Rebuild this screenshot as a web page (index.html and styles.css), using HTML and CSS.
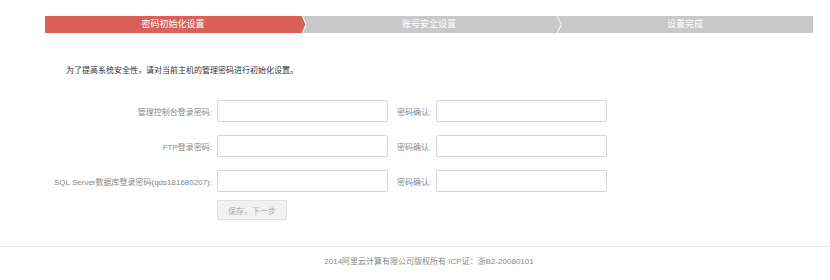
FILE: index.html
```html
<!DOCTYPE html>
<html lang="zh-CN">
<head>
  <meta charset="UTF-8">
  <title>密码初始化设置</title>
  <link rel="stylesheet" href="styles.css">
</head>
<body>
  <div class="container">
    <ol class="steps">
      <li class="step active">
        密码初始化设置
        <svg class="chevron" width="8" height="17" viewBox="0 0 8 17">
          <polygon points="4,0 7.5,8.5 4,17 0,17 0,0" fill="#da605a"/>
          <polyline points="4.5,0 8,8.5 4.5,17" fill="none" stroke="#fff" stroke-width="1"/>
        </svg>
      </li>
      <li class="step">
        账号安全设置
        <svg class="chevron gray" width="8" height="17" viewBox="0 0 8 17">
          <polyline points="2,0 6.5,8.5 2,17" fill="none" stroke="#fff" stroke-width="1"/>
        </svg>
      </li>
      <li class="step">设置完成</li>
    </ol>

    <p class="intro">为了提高系统安全性，请对当前主机的管理密码进行初始化设置。</p>

    <form class="init-form">
      <label class="field-label">管理控制台登录密码:</label>
      <input class="field" type="password">
      <label class="field-label confirm">密码确认:</label>
      <input class="field" type="password">

      <label class="field-label">FTP登录密码:</label>
      <input class="field" type="password">
      <label class="field-label confirm">密码确认:</label>
      <input class="field" type="password">

      <label class="field-label">SQL Server数据库登录密码(qds181680207):</label>
      <input class="field" type="password">
      <label class="field-label confirm">密码确认:</label>
      <input class="field" type="password">

      <button class="button-next" type="button">保存，下一步</button>
    </form>
  </div>

  <div class="footer">2014阿里云计算有限公司版权所有 ICP证：浙B2-20080101</div>
</body>
</html>
```

FILE: styles.css
```css
body{
  margin: 0;
  font-family: "Liberation Sans", "Noto Sans CJK SC", sans-serif;
  font-size: 8px;
  color: #333;
  background: #fff;
}
.container{
  width: 768px;
  margin-left: 45px;
}
.steps{
  display: flex;
  margin: 16px 0 0;
  padding: 0;
  list-style: none;
}
.step{
  position: relative;
  width: 256px;
  height: 17px;
  line-height: 17px;
  text-align: center;
  font-size: 9px;
  color: #fff;
  background-color: #c8c8c8;
}
.step.active{
  background-color: #da605a;
}
.chevron{
  position: absolute;
  top: 0;
  right: -5px;
  z-index: 1;
}
.chevron.gray{
  right: -6px;
}
.intro{
  margin: 32px 0 0 21px;
  line-height: 12px;
}
.init-form{
  display: grid;
  grid-template-columns: 167px 171px max-content 171px;
  grid-auto-rows: 22px;
  justify-content: start;
  column-gap: 5px;
  row-gap: 13px;
  align-items: center;
  margin-top: 23px;
}
.field-label{
  text-align: right;
  color: #888;
  white-space: nowrap;
}
.field-label.confirm{
  margin-left: 4px;
  text-align: left;
}
.field{
  box-sizing: border-box;
  height: 22px;
  margin: 0;
  border: 1px solid #d6d6d6;
  border-radius: 2px;
  background: #fff;
}
.button-next{
  grid-column: 2;
  justify-self: start;
  align-self: start;
  box-sizing: border-box;
  width: 70px;
  height: 20px;
  margin-top: -5px;
  font-family: inherit;
  font-size: 8px;
  color: #aaa;
  background: #f1f1f1;
  border: 1px solid #e0e0e0;
  border-radius: 2px;
}
.footer{
  margin-top: 19px;
  padding: 9px 0 0 28px;
  border-top: 1px solid #e6e6e6;
  text-align: center;
  line-height: 12px;
  color: #888;
}
```
